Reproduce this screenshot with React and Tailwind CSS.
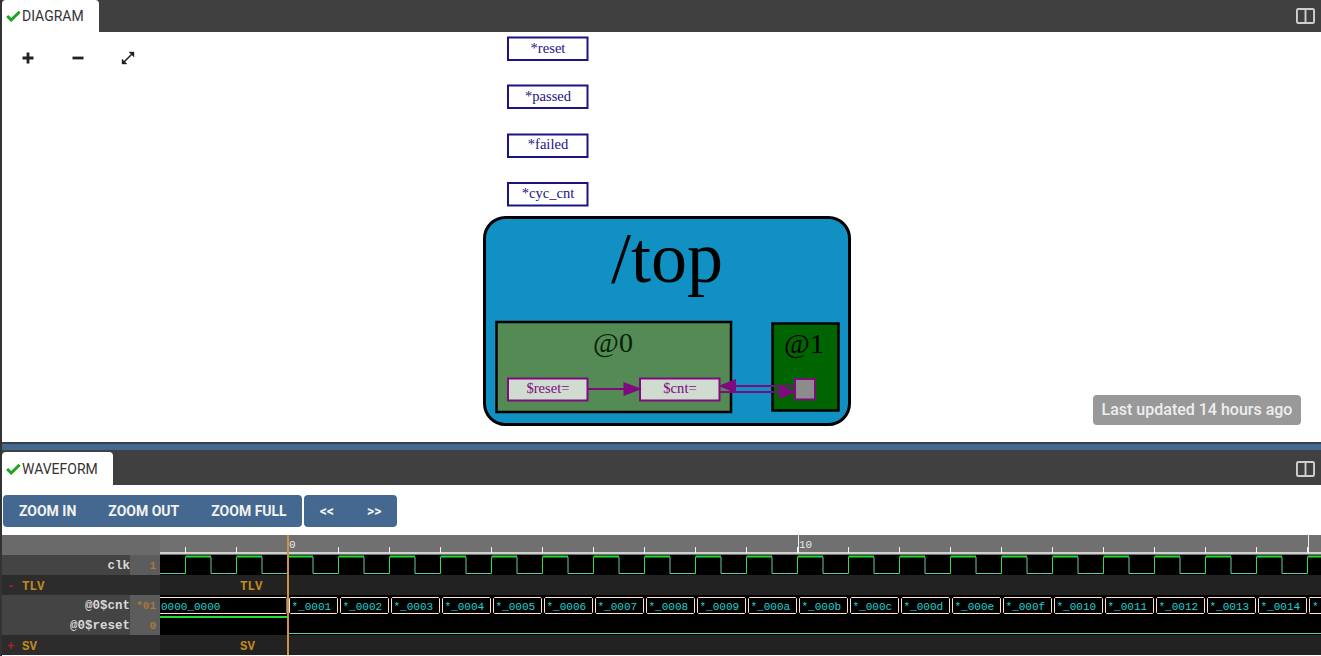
const hexTicks = Array.from({ length: 23 }, (_, i) => 185.5 + i * 51);
const cycles = Array.from({ length: 23 }, (_, i) => i);
const values = Array.from({ length: 20 }, (_, i) => (i + 1).toString(16).padStart(4, '0'));

const CheckIcon = () => (
  <svg viewBox="0 0 15 12" className="w-[15px] h-3 shrink-0" fill="none">
    <path d="M1.2 6 L5.2 10 L13.6 1.8" stroke="#1ea51e" strokeWidth="3" />
  </svg>
);

const SplitIcon = () => (
  <svg viewBox="0 0 20 17" className="w-[19px] h-4" preserveAspectRatio="none" fill="none" stroke="#cfcfcf" strokeWidth="2">
    <rect x="1" y="1" width="18" height="15" rx="1.5" />
    <path d="M10 1 V16" />
  </svg>
);

const PanelBar = ({ title, width, pad }) => (
  <div className="h-full flex items-end justify-between bg-[#404040] pr-[6px]">
    <div className={`${width} ${pad} h-full bg-white rounded-t flex items-center pl-1 text-[14px] text-[#333]`}>
      <CheckIcon />
      <span className="ml-px">{title}</span>
    </div>
    <div className="h-full flex items-center">
      <SplitIcon />
    </div>
  </div>
);

const DiagramControls = () => (
  <div className="absolute left-[18px] top-[18px] flex gap-[34px]">
    <svg viewBox="0 0 16 16" className="w-4 h-4" stroke="#222" strokeWidth="2.8">
      <path d="M2.5 8 H13.5 M8 2.5 V13.5" />
    </svg>
    <svg viewBox="0 0 16 16" className="w-4 h-4" stroke="#222" strokeWidth="2.8">
      <path d="M2.5 8 H13.5" />
    </svg>
    <svg viewBox="0 0 16 16" className="w-4 h-4" fill="#222" stroke="#222" strokeWidth="1.6">
      <path d="M4 12 L12 4" />
      <path d="M9 2 H14 V7 Z" strokeWidth="0.4" />
      <path d="M2 9 V14 H7 Z" strokeWidth="0.4" />
    </svg>
  </div>
);

const SigBox = ({ y, label, baseline }) => (
  <>
    <rect x="508" y={y} width="79.5" height="22.5" fill="#fff" stroke="#1c1485" strokeWidth="2" />
    <text x="548" y={baseline} textAnchor="middle" fontSize="14.6" fontFamily="'Liberation Serif', serif" fill="#1c1485">
      {label}
    </text>
  </>
);

const PURPLE = '#800a80';

const Diagram = () => (
  <svg viewBox="2 32 1319 410" className="w-full h-full block">
    <SigBox y={37.5} label="*reset" baseline={53} />
    <SigBox y={85.5} label="*passed" baseline={101} />
    <SigBox y={134.5} label="*failed" baseline={149} />
    <SigBox y={183} label="*cyc_cnt" baseline={198} />

    <rect x="484.5" y="217.5" width="365" height="207" rx="21" fill="#1090c3" stroke="#000" strokeWidth="3" />
    <text x="667" y="282" textAnchor="middle" fontSize="72" fontFamily="'Liberation Serif', serif" fill="#000">/top</text>

    <rect x="496.5" y="322" width="234.5" height="90" fill="#548b54" stroke="#000" strokeWidth="2.5" />
    <text x="613" y="352" textAnchor="middle" fontSize="28" fontFamily="'Liberation Serif', serif" fill="#0a1f0a">@0</text>

    <rect x="772.5" y="323.5" width="66" height="87" fill="#006400" stroke="#000" strokeWidth="2.5" />
    <text x="804" y="353" textAnchor="middle" fontSize="28" fontFamily="'Liberation Serif', serif" fill="#000">@1</text>

    <rect x="508" y="378.5" width="79.5" height="22" fill="#cfdccf" stroke={PURPLE} strokeWidth="2" />
    <text x="548" y="393" textAnchor="middle" fontSize="14.6" fontFamily="'Liberation Serif', serif" fill={PURPLE}>$reset=</text>
    <rect x="640" y="378.5" width="79.5" height="22" fill="#cfdccf" stroke={PURPLE} strokeWidth="2" />
    <text x="680" y="393" textAnchor="middle" fontSize="14.6" fontFamily="'Liberation Serif', serif" fill={PURPLE}>$cnt=</text>
    <rect x="795" y="379" width="20" height="20.5" fill="#8c8c8c" stroke={PURPLE} strokeWidth="2" />

    <g stroke={PURPLE} strokeWidth="2" fill={PURPLE}>
      <path d="M588 389 H626" />
      <path d="M624.5 383.5 L639 389 L624.5 394.5 Z" />
      <path d="M795 386 H734" />
      <path d="M735 380.5 L721 386 L735 391.5 Z" />
      <path d="M720 392 H782" />
      <path d="M780 386.5 L794 392 L780 397.5 Z" />
    </g>
  </svg>
);

const Toolbar = () => (
  <div className="h-[50px] pt-[10px] pl-px flex gap-[2px] bg-white text-[14px] font-bold text-[#f2f2f2]">
    <div className="h-8 flex items-center gap-8 pl-4 pr-[15px] bg-[#44688f] rounded-sm">
      <span>ZOOM IN</span>
      <span>ZOOM OUT</span>
      <span>ZOOM FULL</span>
    </div>
    <div className="h-8 flex items-center gap-[33px] px-4 bg-[#44688f] rounded-sm">
      <span>&lt;&lt;</span>
      <span>&gt;&gt;</span>
    </div>
  </div>
);

const Ruler = () => (
  <div className="h-5 flex bg-[#6a6a6a]">
    <div className="w-[158px] shrink-0" />
    <svg viewBox="160 535 1161 20" className="w-[1161px] h-5 block bg-[#707070]">
      <path d="M160 553 H1321" stroke="#f0f0f0" strokeWidth="1.5" />
      {hexTicks.map((x) => (
        <path key={x} d={`M${x} 547 V553`} stroke="#f0f0f0" strokeWidth="1" />
      ))}
      <path d="M798.5 535 V553 M1308.5 535 V553" stroke="#f0f0f0" strokeWidth="1" />
      <text x="289" y="548" fontSize="11" fontFamily="'Liberation Mono', monospace" fill="#e8e8e8">0</text>
      <text x="799" y="548" fontSize="11" fontFamily="'Liberation Mono', monospace" fill="#e8e8e8">10</text>
    </svg>
  </div>
);

const SignalRow = ({ name, value, children }) => (
  <div className="h-5 flex font-['Liberation_Mono',monospace]">
    <div className="w-[128px] shrink-0 bg-[#444] text-right text-[12.5px] font-bold leading-[23px] text-[#d8d8d8]">{name}</div>
    <div className="w-[30px] shrink-0 bg-[#5c5c5c] pr-1 text-right text-[11px] font-bold leading-[23px] text-[#a9783a]">{value}</div>
    {children}
  </div>
);

const ScopeRow = ({ sign, name }) => (
  <div className="h-5 flex font-['Liberation_Mono',monospace] text-[12.5px] font-bold leading-6 text-[#c08a1e]">
    <div className="w-[158px] shrink-0 bg-[#2c2c2c] pl-[5px] whitespace-pre">
      <span className="text-[#b81c1c]">{sign}</span> {name}
    </div>
    <div className="flex-1 bg-[#222] pl-[80px]">{name}</div>
  </div>
);

const Clk = () => (
  <svg viewBox="160 555 1161 20" className="w-[1161px] h-5 block bg-black" fill="none">
    <path d="M160 573.5 H185.5" stroke="#66c8a8" />
    {cycles.map((i) => {
      const x = 185.5 + i * 51;
      return (
        <g key={i}>
          <path d={`M${x} 573.5 V557`} stroke="#33dd44" />
          <path d={`M${x} 556.5 H${x + 25.5}`} stroke="#1fe02f" strokeWidth="2" />
          <path d={`M${x + 25.5} 557 V573.5 H${x + 51}`} stroke="#66c8a8" />
        </g>
      );
    })}
  </svg>
);

const busShape = (x0, x1) =>
  `M${x0 + 1} 597.5 H${x1 - 1} L${x1} 598.5 V612.5 L${x1 - 1} 613.5 H${x0 + 1} L${x0} 612.5 V598.5 Z`;

const Cnt = () => (
  <svg viewBox="160 595 1161 20" className="w-[1161px] h-5 block bg-black" fill="none">
    <path d="M160 597.5 H286 L287 598.5 V612.5 L286 613.5 H160" stroke="#ffe2d2" />
    <text x="161" y="609.5" fontSize="11" fontFamily="'Liberation Mono', monospace" fill="#22d0d0">0000_0000</text>
    {values.map((v, i) => {
      const x = 289.5 + i * 51;
      return (
        <g key={v}>
          <path d={busShape(x, x + 48)} stroke="#ffe2d2" />
          <text x={x + 2} y="609.5" fontSize="11" fontFamily="'Liberation Mono', monospace" fill="#22d0d0">
            {`*_${v}`}
          </text>
        </g>
      );
    })}
    <path d="M1309.5 613.5 H1321 M1309.5 597.5 H1321 M1309.5 598.5 V612.5" stroke="#ffe2d2" />
    <text x="1312" y="609.5" fontSize="11" fontFamily="'Liberation Mono', monospace" fill="#22d0d0">*</text>
  </svg>
);

const Reset = () => (
  <svg viewBox="160 615 1161 20" className="w-[1161px] h-5 block bg-black" fill="none">
    <path d="M160 617 H288" stroke="#1fe02f" strokeWidth="2" />
    <path d="M288 633.5 H1321" stroke="#66c8a8" />
  </svg>
);

const Waveform = () => (
  <div className="relative">
    <Ruler />
    <SignalRow name="clk" value="1"><Clk /></SignalRow>
    <ScopeRow sign="-" name="TLV" />
    <SignalRow name="@0$cnt" value="*01"><Cnt /></SignalRow>
    <SignalRow name="@0$reset" value="0"><Reset /></SignalRow>
    <ScopeRow sign="+" name="SV" />
    <div className="absolute z-10 top-0 bottom-0 left-[285px] w-[2px] bg-[#c9933f]" />
  </div>
);

export default function App() {
  return (
    <div className="w-[1321px] h-[656px] overflow-hidden border-l-2 border-[#333] bg-white font-['Roboto',sans-serif]">
      <div className="h-8">
        <PanelBar title="DIAGRAM" width="w-[97px]" pad="" />
      </div>
      <div className="relative h-[410px] bg-white">
        <Diagram />
        <DiagramControls />
        <div className="absolute right-[20px] bottom-[17px] h-[30px] w-[208px] flex items-center justify-center rounded bg-[#999] text-[16px] font-medium text-[#eee]">
          Last updated 14 hours ago
        </div>
      </div>
      <div className="h-2 border-t-2 border-[#34404e] bg-[#44688f]" />
      <div className="h-[35px] pt-[2px] bg-[#404040]">
        <PanelBar title="WAVEFORM" width="w-[111px]" pad="pt-px" />
      </div>
      <Toolbar />
      <Waveform />
    </div>
  );
}
